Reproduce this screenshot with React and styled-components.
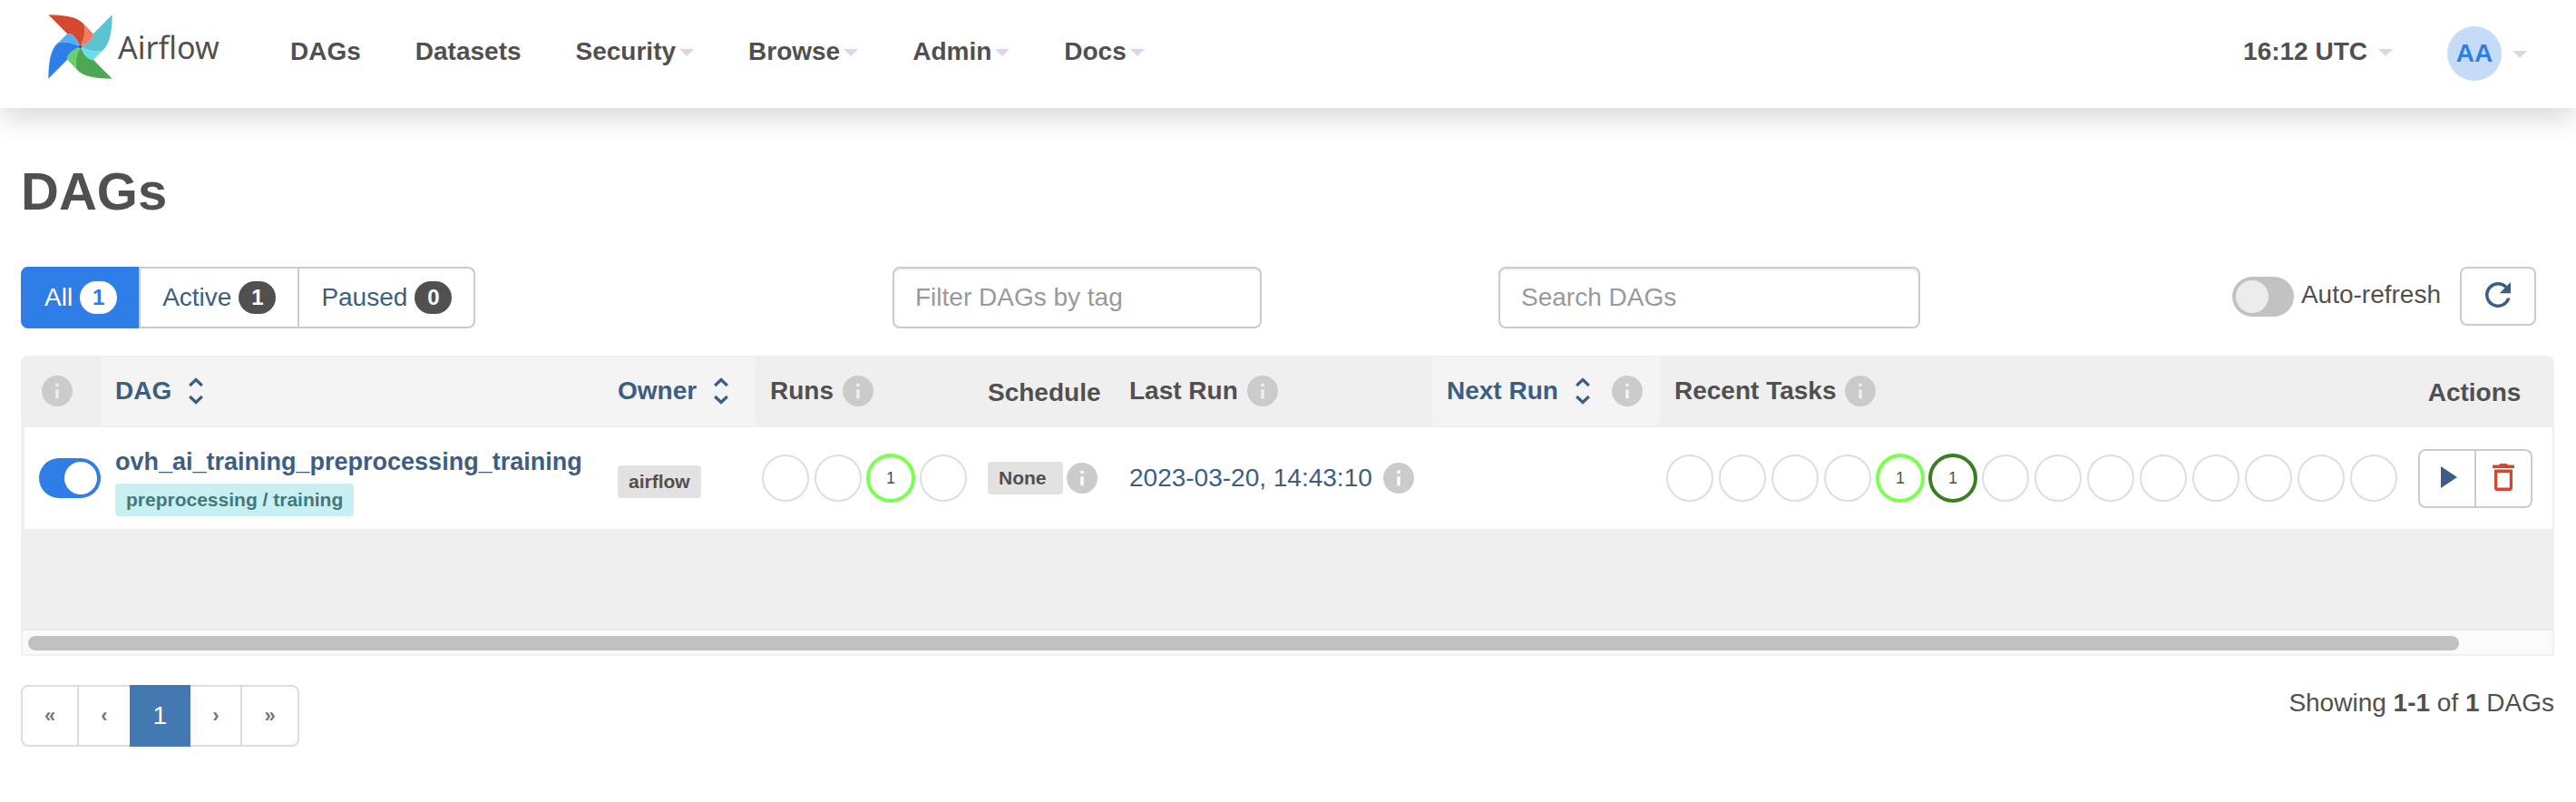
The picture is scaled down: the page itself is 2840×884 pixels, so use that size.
import React from "react";
import styled, { createGlobalStyle, css } from "styled-components";

const c = {
  text: "#51504f",
  link: "#3c5e82",
  blue: "#2f7de6",
  line: "#cbcbcb",
  panel: "#efefef",
};

const GlobalStyle = createGlobalStyle`
  *, *::before, *::after { box-sizing: border-box; }
  body {
    margin: 0;
    background: #fff;
    color: ${c.text};
    font-family: "Liberation Sans", Arial, sans-serif;
    font-size: 28px;
    line-height: 40px;
  }
  button, input { font: inherit; color: inherit; margin: 0; }
  button { cursor: pointer; }
  a { color: inherit; text-decoration: none; }
  svg { display: block; flex: none; }
`;

/* ---------- navigation ---------- */

const Navbar = styled.header`
  display: flex;
  align-items: flex-start;
  justify-content: space-between;
  height: 119px;
  padding: 0 54px 0 53px;
  background: #fff;
  box-shadow: 0 10px 30px rgba(0, 0, 0, 0.16);
`;

const NavGroup = styled.nav`
  display: flex;
  align-items: flex-start;
`;

const Brand = styled.a`
  display: flex;
  align-items: center;
  gap: 6px;
  width: 239px;
  padding-top: 16px;
  font-family: "Noto Sans", sans-serif;
  font-size: 34px;
`;

const NavList = styled.ul`
  display: flex;
  gap: 60px;
  margin: 0;
  padding: 37px 0 0 28px;
  list-style: none;
`;

const navText = css`
  display: flex;
  align-items: center;
  padding: 0;
  border: 0;
  background: none;
  font-weight: bold;
`;

const NavLink = styled.a`
  ${navText}
`;

const NavMenu = styled.button`
  ${navText}
  gap: ${(p) => p.$gap || 4}px;
  &::after {
    content: "";
    border: 8px solid transparent;
    border-top-color: #e0d3e3;
    border-bottom: 0;
    margin-top: 2px;
  }
`;

const UserArea = styled(NavGroup)`
  gap: 60px;
`;

const ClockSlot = styled.div`
  padding-top: 37px;
`;

const AvatarSlot = styled.div`
  padding-top: 29px;
`;

const Avatar = styled.span`
  display: grid;
  place-items: center;
  width: 60px;
  height: 60px;
  border-radius: 50%;
  background: #c5dcf9;
  color: ${c.blue};
`;

/* ---------- page ---------- */

const Page = styled.main`
  padding: 59px 24px 40px 23px;
`;

const Title = styled.h1`
  margin: 0;
  font-size: 58px;
  line-height: 66px;
  font-weight: bold;
`;

const Toolbar = styled.div`
  display: grid;
  grid-template-columns: 961fr 668fr 465fr 679fr;
  align-items: start;
  margin: 50px 20px 30px 0;
`;

const Segments = styled.div`
  display: flex;
`;

const Badge = styled.span`
  display: inline-grid;
  place-items: center;
  min-width: 41px;
  height: 36px;
  border-radius: 18px;
  background: ${c.text};
  color: #fff;
  font-size: 24px;
  line-height: 24px;
  font-weight: bold;
`;

const Segment = styled.a`
  display: flex;
  align-items: center;
  gap: 8px;
  height: 68px;
  padding: 0 24px;
  border: 2px solid ${c.line};
  color: ${c.link};
  & + & { margin-left: -2px; }
  &:first-child { border-radius: 8px 0 0 8px; }
  &:last-child { border-radius: 0 8px 8px 0; }
  ${(p) =>
    p.$active &&
    css`
      background: ${c.blue};
      border-color: ${c.blue};
      color: #fff;
      ${Badge} { background: #fff; color: ${c.blue}; }
    `}
`;

const Field = styled.input`
  width: 100%;
  max-width: ${(p) => p.$max};
  height: 68px;
  padding: 0 23px;
  border: 2px solid ${c.line};
  border-radius: 8px;
  background: #fff;
  box-shadow: inset 0 2px 2px rgba(0, 0, 0, 0.075);
  &::placeholder { color: #999; opacity: 1; }
`;

const RefreshArea = styled.div`
  display: flex;
  justify-content: flex-end;
  align-items: flex-start;
  gap: 21px;
`;

const RefreshLabel = styled.label`
  display: flex;
  gap: 8px;
  padding-top: 11px;
`;

const Toggle = styled.input.attrs({ type: "checkbox" })`
  appearance: none;
  display: block;
  flex: none;
  width: 68px;
  height: 44px;
  padding: 4px;
  border-radius: 22px;
  background: #c4c2c1;
  &::before {
    content: "";
    display: block;
    width: 36px;
    height: 36px;
    border-radius: 50%;
    background: #edecec;
  }
  &:checked { background: ${c.blue}; }
  &:checked::before { margin-left: 24px; background: #fff; }
`;

const IconButton = styled.button`
  display: grid;
  place-items: center;
  width: ${(p) => p.$w}px;
  height: 65px;
  padding: 0 0 3px;
  border: 2px solid ${c.line};
  border-radius: 8px;
  background: #fff;
`;

/* ---------- table ---------- */

const TableFrame = styled.section`
  border: 2px solid ${c.panel};
  border-radius: 8px 8px 0 0;
  background: ${c.panel};
`;

const Table = styled.table`
  width: 100%;
  min-width: 2600px;
  table-layout: fixed;
  border-spacing: 0;
  margin-bottom: 110px;
`;

const Col = styled.col`
  width: ${(p) => p.$w};
`;

const Th = styled.th`
  height: 77px;
  padding: ${(p) => (p.$plain ? "3px 16px 0" : "0 16px 2px")};
  border-bottom: 2px solid ${c.panel};
  background: ${(p) => (p.$sort ? "#f4f4f4" : c.panel)};
  text-align: left;
  font-weight: bold;
  &:first-child { padding-left: 21px; }
  &:last-child { padding-right: 24px; text-align: center; }
`;

const HeadRow = styled.div`
  display: flex;
  align-items: center;
  gap: ${(p) => p.$gap || 10}px;
`;

const SortLink = styled.a`
  display: flex;
  align-items: center;
  gap: 19px;
  color: ${c.link};
`;

const Td = styled.td`
  height: 112px;
  padding: ${(p) => (p.$drop ? 4 : 0)}px ${(p) => (p.$tight ? 6 : 16)}px 0;
  background: #fff;
  vertical-align: middle;
  white-space: nowrap;
  &:first-child { border-left: 2px solid ${c.panel}; padding-right: 0; }
`;

const DagLink = styled.a`
  display: block;
  color: ${c.link};
  font-size: 27px;
  font-weight: bold;
`;

const Tag = styled.a`
  display: inline-block;
  padding: 0 12px;
  border-radius: 4px;
  background: ${(p) => (p.$teal ? "#c8f0f2" : "#e2e2e2")};
  color: ${(p) => (p.$teal ? "#457876" : c.text)};
  font-size: 21px;
  line-height: 36px;
  font-weight: bold;
  vertical-align: middle;
`;

const ScheduleTag = styled(Tag)`
  padding-right: 18px;
`;

const Inline = styled.div`
  display: flex;
  align-items: center;
  gap: ${(p) => p.$gap}px;
  color: ${c.link};
`;

const Circles = styled.div`
  display: flex;
  gap: 4px;
`;

const Circle = styled.a`
  display: grid;
  place-items: center;
  width: 54px;
  height: 54px;
  font-size: 18px;
  line-height: 18px;
  border-radius: 50%;
  ${(p) =>
    p.$ring
      ? css`border: 4px solid ${p.$ring};`
      : css`
          padding: 1px;
          &::before {
            content: "";
            width: 52px;
            height: 52px;
            border: 2px solid #dedede;
            border-radius: 50%;
          }
        `}
`;

const ButtonGroup = styled.div`
  display: flex;
  ${IconButton}:first-child { border-radius: 8px 0 0 8px; }
  ${IconButton}:last-child { border-radius: 0 8px 8px 0; margin-left: -2px; }
`;

const ScrollTrack = styled.div`
  height: 28px;
  padding: 6px 103px 0 6px;
  border-top: 2px solid #e8e8e8;
  background: #fafafa;
`;

const ScrollThumb = styled.div`
  height: 16px;
  border-radius: 8px;
  background: #c1c1c1;
`;

/* ---------- footer ---------- */

const Footer = styled.footer`
  display: flex;
  justify-content: space-between;
  align-items: flex-start;
  margin-top: 32px;
`;

const Pager = styled.ul`
  display: flex;
  margin: 0;
  padding: 0;
  list-style: none;
`;

const PageItem = styled.li`
  & + & { margin-left: -2px; }
`;

const PageLink = styled.a`
  display: flex;
  align-items: center;
  justify-content: center;
  height: 68px;
  padding: 0 24px;
  border: 2px solid #ddd;
  color: #777;
  font-size: 22px;
  font-weight: bold;
  ${PageItem}:first-child & { border-radius: 8px 0 0 8px; }
  ${PageItem}:last-child & { border-radius: 0 8px 8px 0; }
  ${(p) =>
    p.$active &&
    css`
      position: relative;
      border-color: #4478b0;
      background: #4478b0;
      color: #fff;
      font-size: 28px;
      font-weight: normal;
    `}
`;

const Summary = styled.p`
  margin: 0;
`;

/* ---------- drawings ---------- */

const blades = [
  ["#d5492f", "#ee7c61"],
  ["#5bc4d2", "#68dfee"],
  ["#4ea853", "#62d465"],
  ["#2f7de6", "#50b0f9"],
];

const Pinwheel = () => (
  <svg width="71" height="71" viewBox="40 48 214 214" aria-hidden="true">
    {blades.map(([dark, light], i) => (
      <g key={dark} transform={`rotate(${i * 90} 147 155)`}>
        <path fill={dark} d="M41 49C90 50 136 54 159 80C168 104 158 132 147 155C136 128 119 108 104 112Z" />
        <path fill={light} d="M159 80L190 112C194 127 174 144 147 155C158 132 168 104 159 80Z" />
      </g>
    ))}
    <circle cx="147" cy="155" r="5" fill="#51504f" />
  </svg>
);

const InfoIcon = ({ hole = "#efefef" }) => (
  <svg width="34" height="34" viewBox="0 0 34 34" role="img" aria-label="Info">
    <circle cx="17" cy="17" r="17" fill="#cbcbcb" />
    <path fill={hole} d="M15.3 8.7h3.4v3.3h-3.4zM15.3 15.3h3.4v10h-3.4z" />
  </svg>
);

const SortIcon = () => (
  <svg width="16" height="30" viewBox="0 0 16 30" aria-hidden="true">
    <path d="M1.2 9L8 2.500l6.800 6.500M1.200 21L8 27.500l6.800-6.500" fill="none" stroke="#3c5e82" strokeWidth="3.200" />
  </svg>
);

const RefreshIcon = () => (
  <svg width="28" height="28" viewBox="4 4 16 16" aria-hidden="true">
    <path
      fill="#3c5e82"
      d="M17.650 6.350A7.958 7.958 0 0 0 12 4a8 8 0 1 0 7.730 10h-2.080A6 6 0 1 1 12 6c1.660 0 3.140.69 4.220 1.780L13 11h7V4z"
    />
  </svg>
);

const PlayIcon = () => (
  <svg width="22" height="24" viewBox="-4 0 22 24" aria-hidden="true">
    <path fill="#3c5e82" d="M0 0L18 12L0 24Z" />
  </svg>
);

const TrashIcon = () => (
  <svg width="24" height="30" viewBox="0 0 24 30" aria-hidden="true">
    <path
      fill="#d5452f"
      fillRule="evenodd"
      d="M7 1.600L8.500 0h7L17 1.600h7V5H0V1.600zM2 6.600h20V27a3 3 0 0 1-3 3H5a3 3 0 0 1-3-3zM5.200 10v16.600h13.600V10z"
    />
  </svg>
);

/* ---------- data ---------- */

const menus = ["Security", "Browse", "Admin", "Docs"];
const columns = ["86px", "auto", "168px", "240px", "156px", "350px", "251px", "820px", "164px"];
const lime = "#7bff4f";
const runs = [{}, {}, { n: 1, ring: lime }, {}];
const tasks = Array.from({ length: 14 }, (_, i) =>
  i === 4 ? { n: 1, ring: lime } : i === 5 ? { n: 1, ring: "#38801f" } : {}
);

const CircleRow = ({ items }) => (
  <Circles>
    {items.map((s, i) => (
      <Circle key={i} href="#" $ring={s.ring}>{s.n}</Circle>
    ))}
  </Circles>
);

const SortHead = ({ label, info }) => (
  <HeadRow $gap={24}>
    <SortLink href="#">{label}<SortIcon /></SortLink>
    {info && <InfoIcon hole="#f4f4f4" />}
  </HeadRow>
);

const InfoHead = ({ label }) => (
  <HeadRow>{label}<InfoIcon /></HeadRow>
);

export default function App() {
  return (
    <>
      <GlobalStyle />
      <Navbar>
        <NavGroup aria-label="Main">
          <Brand href="#"><Pinwheel />Airflow</Brand>
          <NavList>
            <li><NavLink href="#">DAGs</NavLink></li>
            <li><NavLink href="#">Datasets</NavLink></li>
            {menus.map((m) => (
              <li key={m}><NavMenu type="button">{m}</NavMenu></li>
            ))}
          </NavList>
        </NavGroup>
        <UserArea aria-label="User">
          <ClockSlot><NavMenu type="button" $gap={12}>16:12 UTC</NavMenu></ClockSlot>
          <AvatarSlot><NavMenu type="button" $gap={12}><Avatar>AA</Avatar></NavMenu></AvatarSlot>
        </UserArea>
      </Navbar>

      <Page>
        <Title>DAGs</Title>
        <Toolbar>
          <Segments>
            <Segment href="#" $active>All <Badge>1</Badge></Segment>
            <Segment href="#">Active <Badge>1</Badge></Segment>
            <Segment href="#">Paused <Badge>0</Badge></Segment>
          </Segments>
          <div><Field type="text" $max="61%" aria-label="Filter DAGs by tag" placeholder="Filter DAGs by tag" /></div>
          <Field type="search" $max="100%" aria-label="Search DAGs" placeholder="Search DAGs" />
          <RefreshArea>
            <RefreshLabel><Toggle />Auto-refresh</RefreshLabel>
            <IconButton type="button" $w={84} aria-label="Refresh"><RefreshIcon /></IconButton>
          </RefreshArea>
        </Toolbar>

        <TableFrame>
          <Table>
            <colgroup>{columns.map((w, i) => <Col key={i} $w={w} />)}</colgroup>
            <thead>
              <tr>
                <Th><HeadRow><InfoIcon /></HeadRow></Th>
                <Th $sort><SortHead label="DAG" /></Th>
                <Th $sort><SortHead label="Owner" /></Th>
                <Th><InfoHead label="Runs" /></Th>
                <Th $plain>Schedule</Th>
                <Th><InfoHead label="Last Run" /></Th>
                <Th $sort><SortHead label="Next Run" info /></Th>
                <Th><InfoHead label="Recent Tasks" /></Th>
                <Th $plain>Actions</Th>
              </tr>
            </thead>
            <tbody>
              <tr>
                <Td><Toggle defaultChecked aria-label="Pause/Unpause DAG" /></Td>
                <Td $drop>
                  <DagLink href="#">ovh_ai_training_preprocessing_training</DagLink>
                  <Tag href="#" $teal>preprocessing / training</Tag>
                </Td>
                <Td $drop><Tag href="#">airflow</Tag></Td>
                <Td $tight><CircleRow items={runs} /></Td>
                <Td><Inline $gap={4}><ScheduleTag href="#">None</ScheduleTag><InfoIcon hole="#fff" /></Inline></Td>
                <Td><Inline $gap={12}><a href="#">2023-03-20, 14:43:10</a><InfoIcon hole="#fff" /></Inline></Td>
                <Td />
                <Td $tight><CircleRow items={tasks} /></Td>
                <Td>
                  <ButtonGroup>
                    <IconButton type="button" $w={64} aria-label="Trigger DAG"><PlayIcon /></IconButton>
                    <IconButton type="button" $w={64} aria-label="Delete DAG"><TrashIcon /></IconButton>
                  </ButtonGroup>
                </Td>
              </tr>
            </tbody>
          </Table>
          <ScrollTrack><ScrollThumb /></ScrollTrack>
        </TableFrame>

        <Footer>
          <nav aria-label="Pagination">
            <Pager>
              <PageItem><PageLink href="#">«</PageLink></PageItem>
              <PageItem><PageLink href="#">‹</PageLink></PageItem>
              <PageItem><PageLink href="#" $active>1</PageLink></PageItem>
              <PageItem><PageLink href="#">›</PageLink></PageItem>
              <PageItem><PageLink href="#">»</PageLink></PageItem>
            </Pager>
          </nav>
          <Summary>Showing <strong>1-1</strong> of <strong>1</strong> DAGs</Summary>
        </Footer>
      </Page>
    </>
  );
}
